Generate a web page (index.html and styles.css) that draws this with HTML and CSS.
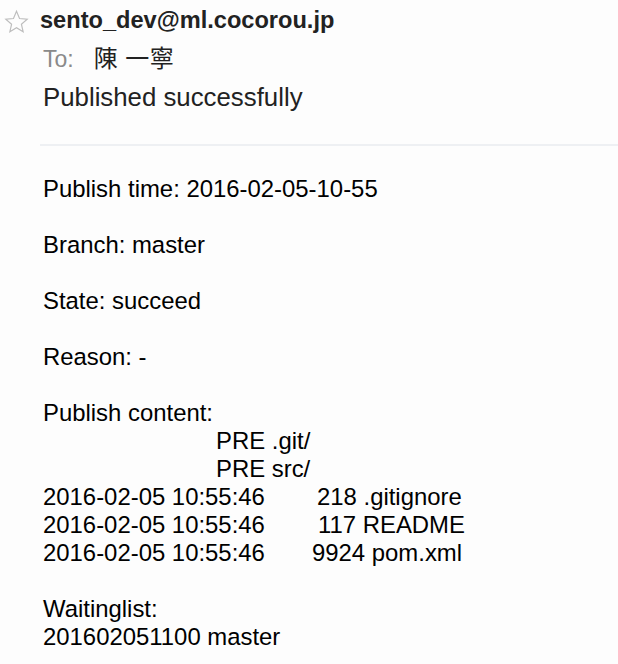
FILE: index.html
```html
<!DOCTYPE html>
<html>
<head>
<meta charset="utf-8">
<link rel="stylesheet" href="styles.css">
</head>
<body>
<div class="mail">
  <header class="head">
    <div class="from-row">
      <svg class="star" viewBox="0 0 24 24" width="24" height="24"><path d="M12 2.2l2.9 6.9 7.4.6-5.6 4.9 1.7 7.3L12 18l-6.4 3.9 1.7-7.3L1.7 9.7l7.4-.6z" fill="none" stroke="#bdbdbd" stroke-width="1.1" stroke-linejoin="miter"/></svg>
      <span class="from">sento_dev@ml.cocorou.jp</span>
    </div>
    <div class="to"><span class="to-label">To:</span><span class="to-name">陳 一寧</span></div>
    <div class="subject">Published successfully</div>
  </header>
  <hr class="divider">
  <div class="body">
    <p class="line">Publish time: 2016-02-05-10-55</p>
    <p class="line gap">Branch: master</p>
    <p class="line gap">State: succeed</p>
    <p class="line gap">Reason: -</p>
    <p class="line gap">Publish content:</p>
    <p class="line"><span class="pre-ind">PRE .git/</span></p>
    <p class="line"><span class="pre-ind">PRE src/</span></p>
    <p class="line"><span class="date">2016-02-05 10:55:46</span><span class="size s1">218 .gitignore</span></p>
    <p class="line"><span class="date">2016-02-05 10:55:46</span><span class="size s2">117 README</span></p>
    <p class="line"><span class="date">2016-02-05 10:55:46</span><span class="size s3">9924 pom.xml</span></p>
    <p class="line gap">Waitinglist:</p>
    <p class="line">201602051100 master</p>
  </div>
</div>
</body>
</html>
```
FILE: styles.css
```css
html, body {
  margin: 0;
  padding: 0;
  background: #fdfdfd;
}
body {
  font-family: "Liberation Sans", Arial, sans-serif;
  color: #000;
}
.head {
  padding-top: 5px;
}
.from-row {
  display: flex;
  align-items: center;
  height: 30px;
}
.star {
  width: 25px;
  height: 25px;
  margin-left: 4px;
  margin-right: 11px;
  margin-top: 2px;
}
.from {
  font-weight: bold;
  font-size: 23.6px;
  line-height: 30px;
  color: #222;
}
.to {
  margin: 9px 0 0 43px;
  font-size: 23px;
  line-height: 30px;
  color: #222;
}
.to-label {
  color: #8a8a8a;
  margin-right: 20px;
}
.to-name {
  font-family: "Liberation Sans", "Noto Sans CJK JP", sans-serif;
  font-size: 24px;
  letter-spacing: 0.5px;
}
.subject {
  margin: 8px 0 0 43px;
  font-size: 25.8px;
  line-height: 30px;
  color: #222;
}
.divider {
  border: 0;
  height: 2px;
  background: #eef0f3;
  margin: 32px 0 0 40px;
}
.body {
  padding: 29px 0 0 43px;
  font-size: 23.9px;
  line-height: 28px;
}
.line {
  margin: 0;
  white-space: pre;
}
.gap {
  margin-top: 28px;
}
.pre-ind {
  margin-left: 173px;
}
.date {
  display: inline-block;
  width: 274px;
}
.s1 { margin-left: 0; }
.s2 { margin-left: 1px; }
.s3 { margin-left: -5px; }
```
